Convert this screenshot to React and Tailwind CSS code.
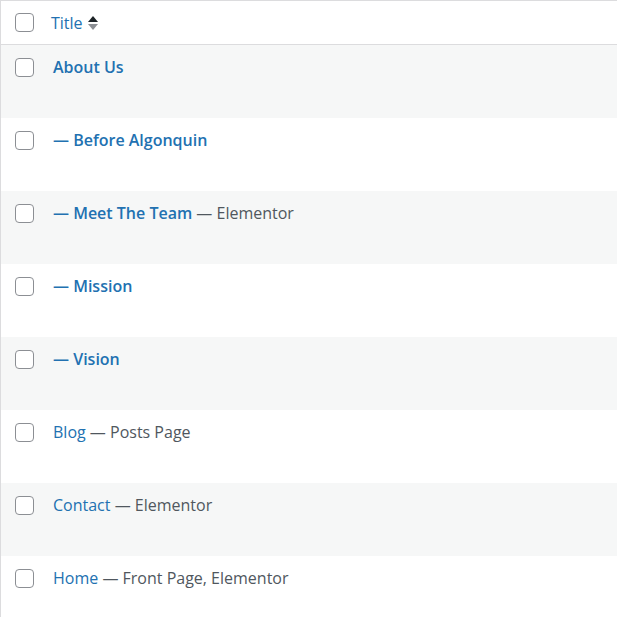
import React from 'react';

const rows = [
  { title: 'About Us', prefix: '', state: '' },
  { title: 'Before Algonquin', prefix: '— ', state: '' },
  { title: 'Meet The Team', prefix: '— ', state: 'Elementor' },
  { title: 'Mission', prefix: '— ', state: '' },
  { title: 'Vision', prefix: '— ', state: '' },
  { title: 'Blog', prefix: '', state: 'Posts Page', plain: true },
  { title: 'Contact', prefix: '', state: 'Elementor', plain: true },
  { title: 'Home', prefix: '', state: 'Front Page, Elementor', plain: true },
];

function Checkbox() {
  return <span className="block w-[19px] h-[19px] rounded-[4px] border border-[#8c8f94] bg-white shrink-0" />;
}

function SortArrows() {
  return (
    <svg width="12" height="20" viewBox="0 0 12 20" className="ml-[4px]">
      <path d="M1 9 L6 3 L11 9 Z" fill="#1d2327" />
      <path d="M1 11 L6 17 L11 11 Z" fill="#8c8f94" />
    </svg>
  );
}

export default function App() {
  return (
    <div
      className="w-[617px] h-[617px] overflow-hidden bg-white border-t border-l border-[#dcdcde]"
      style={{ fontFamily: "'Open Sans', 'Noto Sans', sans-serif" }}
    >
      {/* header */}
      <div className="flex items-center h-[44px] border-b border-[#dcdcde] pl-[14px]">
        <Checkbox />
        <span className="ml-[17px] text-[16px] text-[#2271b1]">Title</span>
        <SortArrows />
      </div>
      {rows.map((r, i) => (
        <div
          key={r.title}
          className={`flex items-start h-[73px] pl-[14px] pt-[13px] ${i % 2 === 0 ? 'bg-[#f6f7f7]' : 'bg-white'}`}
        >
          <Checkbox />
          <div className="ml-[19px] -mt-[2px] text-[16px] leading-[22px] text-[#50575e]">
            <span className={`text-[#2271b1] ${r.plain ? 'font-medium' : 'font-semibold'}`}>
              {r.prefix}{r.title}
            </span>
            {r.state && <span className="font-medium"> — {r.state}</span>}
          </div>
        </div>
      ))}
    </div>
  );
}
